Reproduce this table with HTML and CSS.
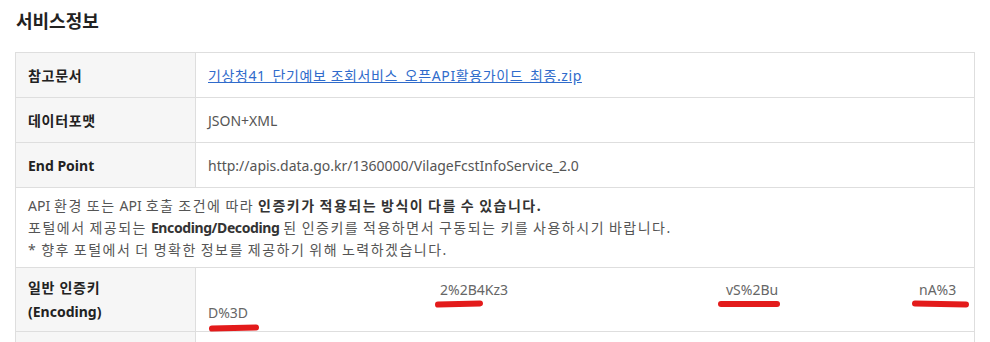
FILE: index.html
```html
<!DOCTYPE html>
<html lang="ko">
<head>
<meta charset="utf-8">
<link rel="stylesheet" href="styles.css">
</head>
<body>
<div class="page">
  <h2 class="title">서비스정보</h2>
  <div class="table">
    <div class="row">
      <div class="th th-ko">참고문서</div>
      <div class="td"><a class="link" href="#">기상청41_단기예보 조회서비스_오픈API활용가이드_최종.zip</a></div>
    </div>
    <div class="row">
      <div class="th th-ko">데이터포맷</div>
      <div class="td">JSON+XML</div>
    </div>
    <div class="row">
      <div class="th">End Point</div>
      <div class="td">http://apis.data.go.kr/1360000/VilageFcstInfoService_2.0</div>
    </div>
    <div class="notice">
      <p><span class="latin">API</span> 환경 또는 <span class="latin">API</span> 호출 조건에 따라 <b>인증키가 적용되는 방식이 다를 수 있습니다.</b></p>
      <p>포털에서 제공되는 <b class="latin-b">Encoding/Decoding</b> 된 인증키를 적용하면서 구동되는 키를 사용하시기 바랍니다.</p>
      <p>* 향후 포털에서 더 명확한 정보를 제공하기 위해 노력하겠습니다.</p>
    </div>
    <div class="row row-key">
      <div class="th th-key"><span class="th-ko">일반 인증키</span><span>(Encoding)</span></div>
      <div class="td td-key">
        <div class="keyline">
          <span class="frag frag-a">2%2B4Kz3<span class="mark mark-a"></span></span>
          <span class="frag frag-b">vS%2Bu<span class="mark mark-b"></span></span>
          <span class="frag frag-c">nA%3<span class="mark mark-c"></span></span>
        </div>
        <div class="keyline">
          <span class="frag frag-d">D%3D<span class="mark mark-d"></span></span>
        </div>
      </div>
    </div>
    <div class="row row-last">
      <div class="th"></div>
      <div class="td"></div>
    </div>
  </div>
</div>
</body>
</html>
```
FILE: styles.css
```css
* { box-sizing: border-box; }
html, body { margin: 0; padding: 0; background: #fff; }
body {
  font-family: "Noto Sans", "Noto Sans CJK KR", sans-serif;
  color: #333;
  overflow: hidden;
  height: 342px;
}
.page { padding: 8px 15px 0 15px; width: 990px; }
.title {
  margin: 0 0 0 1px;
  font-size: 18px;
  font-weight: 700;
  color: #222;
  line-height: 26px;
  height: 44px;
}
.table {
  border-top: 1px solid #dedede;
  border-left: 1px solid #dedede;
  border-right: 1px solid #dedede;
}
.row {
  display: grid;
  grid-template-columns: 180px 1fr;
  height: 45px;
  border-bottom: 1px solid #dedede;
}
.th {
  background: #f6f6f6;
  border-right: 1px solid #dedede;
  font-size: 14px;
  font-weight: 700;
  color: #222;
  display: flex;
  align-items: center;
  padding-left: 12px;
}
.th-ko { letter-spacing: 0.7px; }
.td {
  display: flex;
  align-items: center;
  padding-left: 12px;
  font-size: 14px;
  color: #555;
}
.link { color: #2f6bcb; text-decoration: underline; letter-spacing: 0.6px; }
.notice {
  height: 80px;
  border-bottom: 1px solid #dedede;
  padding: 7px 12px 0 12px;
  font-size: 14px;
  color: #555;
  letter-spacing: 1.5px;
  word-spacing: -1.2px;
}
.notice p { margin: 0; line-height: 22px; }
.notice b { color: #333; }
.notice .latin { letter-spacing: 0; }
.notice .latin-b { letter-spacing: -0.4px; }
.row-key { height: 64px; }
.th-key {
  flex-direction: column;
  align-items: flex-start;
  justify-content: center;
  line-height: 24px;
}
.td-key {
  flex-direction: column;
  align-items: stretch;
  justify-content: center;
  padding-top: 3px;
}
.keyline { display: flex; height: 23px; align-items: center; }
.frag { position: relative; display: inline-block; line-height: 20px; color: #666; flex: none; }
.mark {
  position: absolute;
  bottom: -7px;
  height: 6px;
  background: #e31b1b;
  border-radius: 3px;
}
.frag-a { margin-left: 232px; width: 100px; }
.frag-b { margin-left: 186px; width: 60px; }
.frag-c { margin-left: 133px; }
.mark-a { left: -5px; width: 48px; transform: rotate(-1.5deg); }
.mark-b { left: -8px; width: 62px; }
.mark-c { left: -7px; width: 57px; transform: rotate(1deg); }
.mark-d { left: 1px; width: 50px; transform: rotate(-1.5deg); bottom: -8px; }
.row-last { height: 20px; border-bottom: none; }
```
